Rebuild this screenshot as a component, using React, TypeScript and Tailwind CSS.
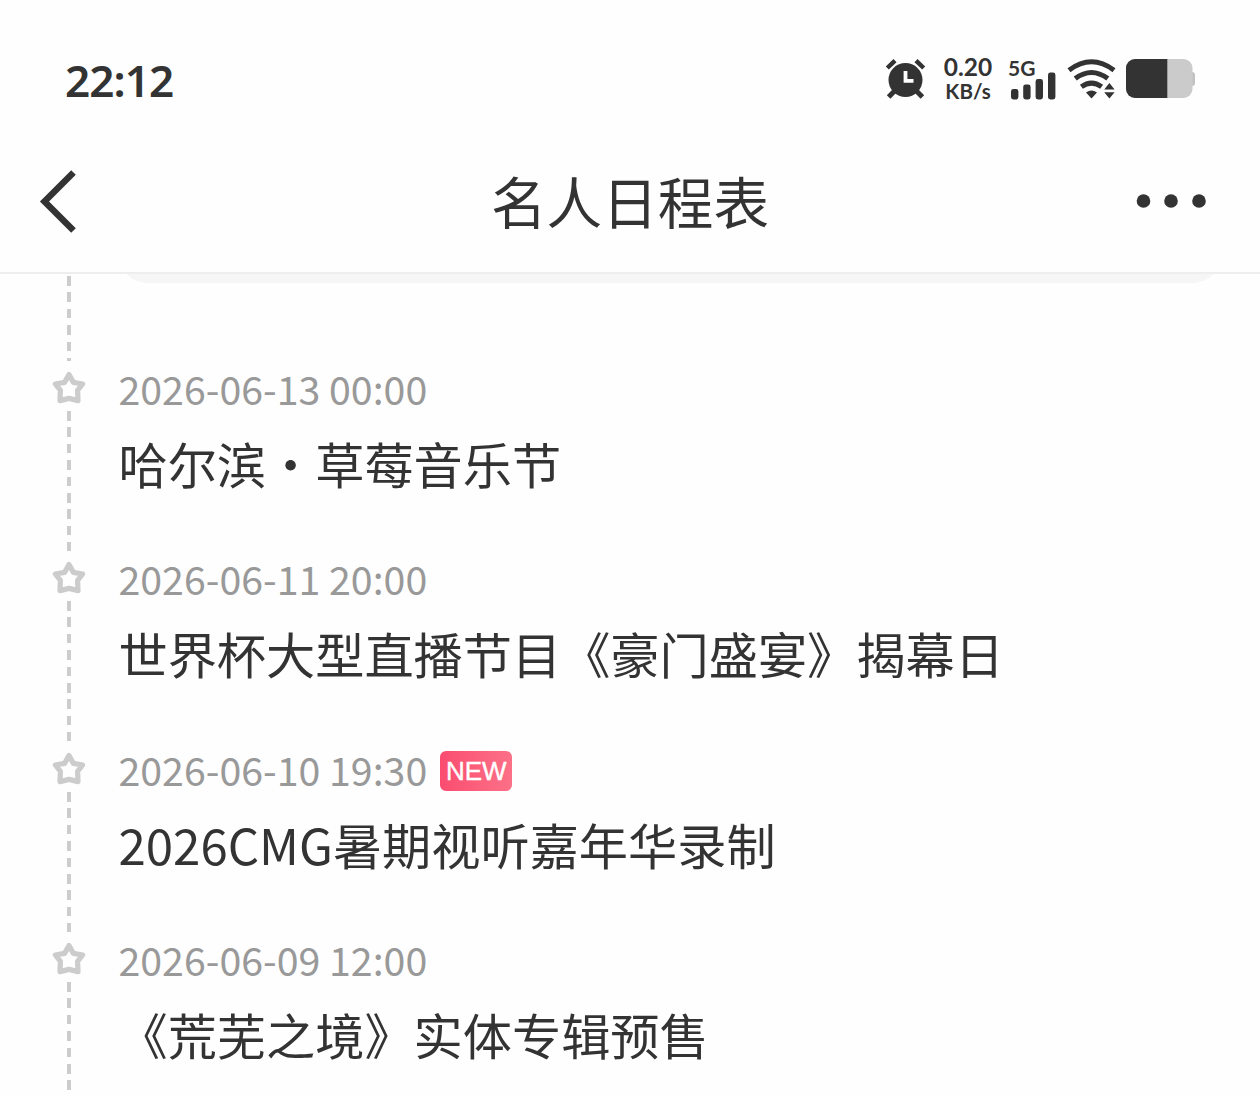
interface ScheduleItem {
  time: string;
  title: string;
  isNew?: boolean;
}

const schedule: ScheduleItem[] = [
  { time: "2026-06-13 00:00", title: "哈尔滨・草莓音乐节" },
  { time: "2026-06-11 20:00", title: "世界杯大型直播节目《豪门盛宴》揭幕日" },
  { time: "2026-06-10 19:30", title: "2026CMG暑期视听嘉年华录制", isNew: true },
  { time: "2026-06-09 12:00", title: "《荒芜之境》实体专辑预售" },
];

function AlarmIcon() {
  return (
    <svg width="42" height="42" viewBox="0 0 42 42" className="shrink-0">
      <g stroke="#333" fill="none">
        <path d="M2.3 10L10 2.6M31 2.6L38.7 10" strokeWidth="4.4" />
        <path d="M10 32.5L3.6 39M31 32.5L37.4 39" strokeWidth="5" />
      </g>
      <circle cx="20.5" cy="22" r="17" fill="#333" />
      <path d="M20.5 13V22.9H28.5" stroke="#fff" strokeWidth="3.8" fill="none" />
    </svg>
  );
}

function SignalIcon() {
  return (
    <svg width="46" height="30" viewBox="0 0 46 30" fill="#333">
      <rect x="1" y="18" width="7.4" height="10.5" rx="2.4" />
      <rect x="13.2" y="13.5" width="7.4" height="15" rx="2.4" />
      <rect x="25.6" y="8" width="7.4" height="20.5" rx="2.4" />
      <rect x="38" y="1.5" width="7.4" height="27" rx="2.4" />
    </svg>
  );
}

function WifiIcon() {
  return (
    <svg width="50" height="42" viewBox="0 0 50 42" className="shrink-0">
      <g stroke="#333" strokeWidth="5" fill="none">
        <path d="M2 12.2Q24.5 -4.6 47 12.2" />
        <path d="M8.2 20.6Q24.5 8.4 40.8 20.6" />
        <path d="M14.4 28.8Q24.5 21.4 34.6 28.8" />
      </g>
      <path d="M19 34.4Q24.5 30.6 30 34.4L24.5 40.6Z" fill="#333" />
      <path d="M42.4 25L47.6 31.4H37.2ZM37.2 34.2H47.6L42.4 40.6Z" fill="#333" />
    </svg>
  );
}

function BatteryIcon() {
  return (
    <svg width="70" height="40" viewBox="0 0 70 40" className="shrink-0">
      <rect x="60" y="13" width="9" height="14" rx="3" fill="#c2c2c2" />
      <rect x="0" y="0" width="66.5" height="39" rx="9" fill="#cbcbcb" />
      <path d="M9 0H41.3V39H9A9 9 0 0 1 0 30V9A9 9 0 0 1 9 0Z" fill="#333" />
    </svg>
  );
}

function StarIcon() {
  return (
    <svg width="36" height="36" viewBox="0 0 36 36">
      <path
        d="M18 4.6L22.4 12.4L31.6 14L26.6 20.4L27 30.6L18 28.4L9 30.6L9.4 20.4L4.4 14L13.6 12.4Z"
        fill="none"
        stroke="#ccc"
        strokeWidth="5.2"
        strokeLinejoin="round"
      />
    </svg>
  );
}

function DashedLine({ className }: { className: string }) {
  return (
    <div
      className={`w-[3.5px] bg-[repeating-linear-gradient(to_bottom,#ccc_0px,#ccc_9.6px,transparent_9.6px,transparent_16.4px)] ${className}`}
    />
  );
}

function ScheduleRow({ item }: { item: ScheduleItem }) {
  return (
    <li className="flex h-[190.25px]">
      <div className="ml-[51px] flex w-9 shrink-0 flex-col items-center">
        <div className="flex h-[50px] items-center pt-[4px]">
          <StarIcon />
        </div>
        <DashedLine className="h-[140px]" />
      </div>
      <div className="ml-[31.5px] whitespace-nowrap">
        <div className="flex h-[60px] items-center">
          <span className="pb-[6px] text-[39.3px] leading-[54px] text-[#999]">{item.time}</span>
          {item.isNew && (
            <span className="mb-[2px] ml-[13px] flex h-10 w-[72px] items-center justify-center rounded-[6px] bg-linear-to-r from-[#fa4c70] to-[#fc7087] pt-[2px] font-['Liberation_Sans',sans-serif] text-[26px] text-white [-webkit-text-stroke:0.4px_white]">
              NEW
            </span>
          )}
        </div>
        <p className="mt-[7px] text-[49.2px] leading-[70px] text-[#333]">{item.title}</p>
      </div>
    </li>
  );
}

export default function App() {
  return (
    <div className="flex h-[1096px] w-[1260px] flex-col overflow-hidden bg-[#fefefe] font-['Noto_Sans_CJK_SC',sans-serif] text-[#333]">
      <div className="flex h-[130px] shrink-0 items-center pt-[27px] pr-[64px] pl-[65px]">
        <span className="pt-[2px] font-['Noto_Sans',sans-serif] text-[44px] leading-none font-semibold tracking-[-0.9px]">
          22:12
        </span>
        <div className="ml-auto flex items-center font-['Lato',sans-serif]">
          <AlarmIcon />
          <div className="ml-[15px] flex w-[52px] flex-col items-center font-bold">
            <span className="text-[24.5px] leading-[25px]">0.20</span>
            <span className="text-[20.5px] leading-[25px]">KB/s</span>
          </div>
          <div className="ml-[15px] flex flex-col">
            <span className="-ml-[1px] h-[18px] text-[21px] leading-[21px] font-bold">5G</span>
            <div className="-mt-[4px] ml-[1px]">
              <SignalIcon />
            </div>
          </div>
          <div className="ml-[11px]">
            <WifiIcon />
          </div>
          <div className="ml-[9px]">
            <BatteryIcon />
          </div>
        </div>
      </div>

      <header className="flex h-[144px] shrink-0 items-center justify-between border-b-2 border-[#eee] pr-[52px] pl-[38px]">
        <svg width="86" height="64" viewBox="0 0 86 64" fill="none" stroke="#333" strokeWidth="6.5">
          <path d="M35.5 3.5L6.5 32.5L35.5 61.5" />
        </svg>
        <h1 className="pb-[2px] text-[55.6px] leading-[80px] font-normal">名人日程表</h1>
        <svg width="72" height="16" viewBox="0 0 72 16" fill="#333">
          <circle cx="7.5" cy="8" r="6.8" />
          <circle cx="35" cy="8" r="6.8" />
          <circle cx="63" cy="8" r="6.8" />
        </svg>
      </header>

      {/* tail of the entry scrolled under the header */}
      <div className="flex h-[87px] shrink-0">
        <div className="ml-[51px] flex w-9 flex-col items-center pt-[2px]">
          <DashedLine className="h-[85px]" />
        </div>
        <div className="ml-[32px] h-[9px] w-[1102px] overflow-hidden">
          <div className="-mt-[61px] h-[70px] rounded-[28px] bg-[#f6f6f6]" />
        </div>
      </div>

      <ul className="flex shrink-0 flex-col">
        {schedule.map((item) => (
          <ScheduleRow key={item.time} item={item} />
        ))}
      </ul>
    </div>
  );
}
